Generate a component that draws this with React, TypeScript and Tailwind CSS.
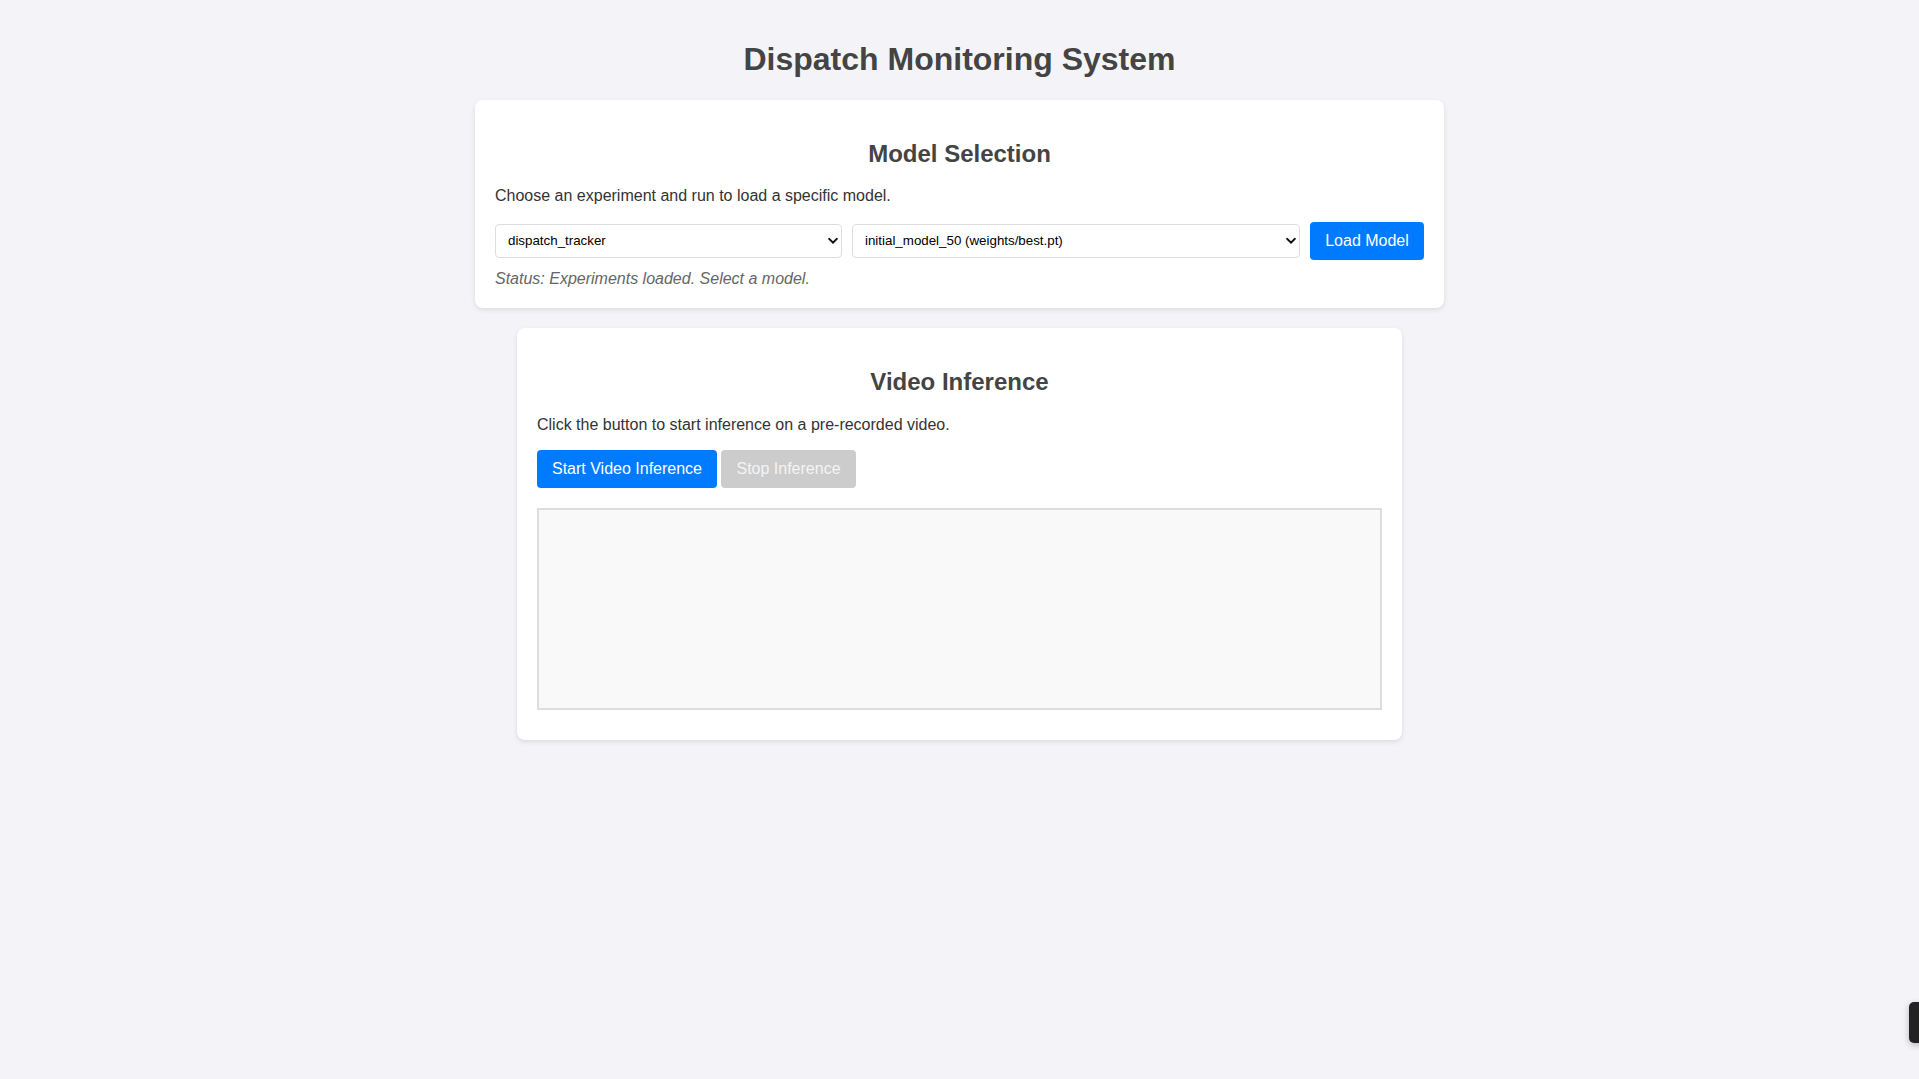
import React, { useState } from "react";

const font = { fontFamily: '"Liberation Sans", Arial, sans-serif' };

function Chevron() {
  return (
    <svg
      className="pointer-events-none absolute right-[4px] top-1/2 -translate-y-1/2"
      width="10"
      height="7"
      viewBox="0 0 10 7"
      fill="none"
    >
      <path d="M1.2 1.4 L5 5.2 L8.8 1.4" stroke="#111" strokeWidth="2" strokeLinecap="square" />
    </svg>
  );
}

function Select({ value, options, className }: { value: string; options: string[]; className: string }) {
  const [v, setV] = useState(value);
  return (
    <div className={`relative ${className}`}>
      <select
        value={v}
        onChange={(e) => setV(e.target.value)}
        className="h-[34px] w-full appearance-none rounded-[4px] border border-[#dddddd] bg-white pl-[12px] pr-6 text-[13.33px] text-black outline-none"
        style={font}
      >
        {options.map((o) => (
          <option key={o}>{o}</option>
        ))}
      </select>
      <Chevron />
    </div>
  );
}

export default function App() {
  const [running, setRunning] = useState(false);

  return (
    <div className="min-h-[1079px] bg-[#f4f4f8] px-5 pt-5 text-[#333333]" style={font}>
      <h1 className="my-[21.4px] text-center text-[32px] font-bold leading-[36.8px] text-[#444444]">
        Dispatch Monitoring System
      </h1>

      {/* Model selection */}
      <section className="mx-auto w-[969px] rounded-[8px] bg-white p-5 shadow-[0_2px_5px_rgba(0,0,0,0.1)]">
        <h2 className="mt-5 mb-5 text-center text-[24px] font-bold leading-[27.6px] text-[#444444]">Model Selection</h2>
        <p className="text-[16px] leading-[18.4px]">Choose an experiment and run to load a specific model.</p>
        <div className="mt-[16px] flex items-center gap-[10px]">
          <Select value="dispatch_tracker" options={["dispatch_tracker"]} className="w-[347px]" />
          <Select
            value="initial_model_50 (weights/best.pt)"
            options={["initial_model_50 (weights/best.pt)"]}
            className="w-[448px]"
          />
          <button
            type="button"
            className="h-[38px] w-[114px] rounded-[4px] bg-[#007bff] text-[16px] text-white"
          >
            Load Model
          </button>
        </div>
        <p className="mt-[10px] text-[16px] italic leading-[18.4px] text-[#666666]">
          Status: Experiments loaded. Select a model.
        </p>
      </section>

      {/* Video inference */}
      <section className="mx-auto mt-5 w-[885px] rounded-[8px] bg-white px-5 pt-5 pb-[30px] shadow-[0_2px_5px_rgba(0,0,0,0.1)]">
        <h2 className="mt-5 mb-5 text-center text-[24px] font-bold leading-[27.6px] text-[#444444]">Video Inference</h2>
        <p className="text-[16px] leading-[18.4px]">Click the button to start inference on a pre-recorded video.</p>
        <div className="mt-[16px] flex gap-[4px]">
          <button
            type="button"
            onClick={() => setRunning(true)}
            className="h-[38px] w-[180px] rounded-[4px] bg-[#007bff] text-[16px] text-white"
          >
            Start Video Inference
          </button>
          <button
            type="button"
            disabled={!running}
            onClick={() => setRunning(false)}
            className="h-[38px] w-[135px] rounded-[4px] bg-[#cccccc] text-[16px] text-[#f4f4f4]"
          >
            Stop Inference
          </button>
        </div>
        <div className="mt-[20px] h-[202px] w-full border-2 border-[#dddddd] bg-[#f9f9f9]" />
      </section>

      {/* floating widget tab at the right edge */}
      <div className="fixed right-[-10px] top-[1002px] h-[41px] w-[20px] rounded-[5px] bg-[#222222] shadow-[0_2px_6px_rgba(0,0,0,0.25)]" />
    </div>
  );
}
